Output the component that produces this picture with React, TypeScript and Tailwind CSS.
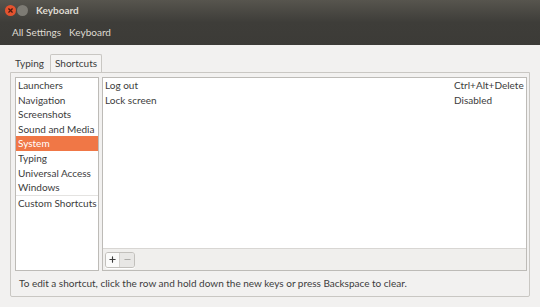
import { Minus, Plus, X } from 'lucide-react';

const categories = [
  'Launchers',
  'Navigation',
  'Screenshots',
  'Sound and Media',
  'System',
  'Typing',
  'Universal Access',
  'Windows',
];

const shortcuts = [
  { name: 'Log out', keys: 'Ctrl+Alt+Delete' },
  { name: 'Lock screen', keys: 'Disabled' },
];

export default function App() {
  return (
    <div
      className="w-[540px] h-[307px] flex flex-col bg-[#f2f1f0] text-[#3c3c3c] text-[10px] overflow-hidden"
      style={{ fontFamily: 'Lato, "Liberation Sans", sans-serif' }}
    >
      {/* title bar + toolbar */}
      <div className="bg-gradient-to-b from-[#57554e] via-[#3e3d39] to-[#3c3b37] text-[#dfdbd2]">
        <div className="h-[20px] flex items-center gap-[1px] pl-[5px]">
          <div className="w-[11px] h-[11px] rounded-full bg-[#e4532f] flex items-center justify-center">
            <X className="w-[7px] h-[7px] text-[#4a1a10]" strokeWidth={4} />
          </div>
          <div className="w-[11px] h-[11px] rounded-full bg-[#7d7b74]" />
          <span className="ml-[7px] font-bold text-[10px] text-[#dfdbd2]">Keyboard</span>
        </div>
        <div className="h-[25px] flex items-center gap-[8px] pl-[12px] text-[10px]">
          <span>All Settings</span>
          <span>Keyboard</span>
        </div>
      </div>

      {/* tabs */}
      <div className="flex items-end pl-[13px] pt-[10px] h-[27px]">
        <div className="px-[2px] pb-[1px]">Typing</div>
        <div className="ml-[4px] h-[18px] px-[4px] border border-b-0 border-[#c9c7c3] rounded-t-[2px] bg-[#f5f4f3] flex items-center">
          Shortcuts
        </div>
      </div>

      {/* notebook page */}
      <div className="mx-[10px] w-[520px] h-[225px] border border-[#c9c7c3] rounded-b-[2px] flex flex-col">
        <div className="flex gap-[3px] pl-[4px] pt-[4px] h-[198px]">
          <div className="w-[84px] h-[194px] bg-white border border-[#bdbbb7] flex flex-col">
            {categories.map((c) => (
              <div
                key={c}
                className={
                  c === 'System'
                    ? 'h-[14.6px] leading-[14.6px] pl-[2px] bg-[#f07746] text-white whitespace-nowrap'
                    : 'h-[14.6px] leading-[14.6px] pl-[2px] whitespace-nowrap'
                }
              >
                {c}
              </div>
            ))}
            <div className="border-t border-[#e4e3e1] pl-[2px] h-[15px] leading-[14px] whitespace-nowrap">
              Custom Shortcuts
            </div>
          </div>

          <div className="w-[425px] h-[194px] border border-[#bdbbb7] flex flex-col">
            <div className="h-[171px] bg-white border-b border-[#d8d6d3]">
              {shortcuts.map((s) => (
                <div key={s.name} className="flex justify-between h-[14.6px] leading-[14.6px] pl-[2px]">
                  <span>{s.name}</span>
                  <span className="w-[72px] whitespace-nowrap">{s.keys}</span>
                </div>
              ))}
            </div>
            <div className="flex-1 flex items-center pl-[2px] bg-[#f0efed]">
              <div className="flex h-[16px] border border-[#c2c0bc] rounded-[3px] overflow-hidden shadow-[0_1px_0_#fff]">
                <div className="w-[14px] flex items-center justify-center bg-[#fbfbfa] border-r border-[#d4d2ce]">
                  <Plus className="w-[9px] h-[9px] text-[#3c3c3c]" strokeWidth={3} />
                </div>
                <div className="w-[14px] flex items-center justify-center bg-[#e8e7e5]">
                  <Minus className="w-[9px] h-[9px] text-[#9a9894]" strokeWidth={2} />
                </div>
              </div>
            </div>
          </div>
        </div>
        <div className="flex-1 flex items-center pl-[8px] whitespace-nowrap">
          To edit a shortcut, click the row and hold down the new keys or press Backspace to clear.
        </div>
      </div>
    </div>
  );
}
